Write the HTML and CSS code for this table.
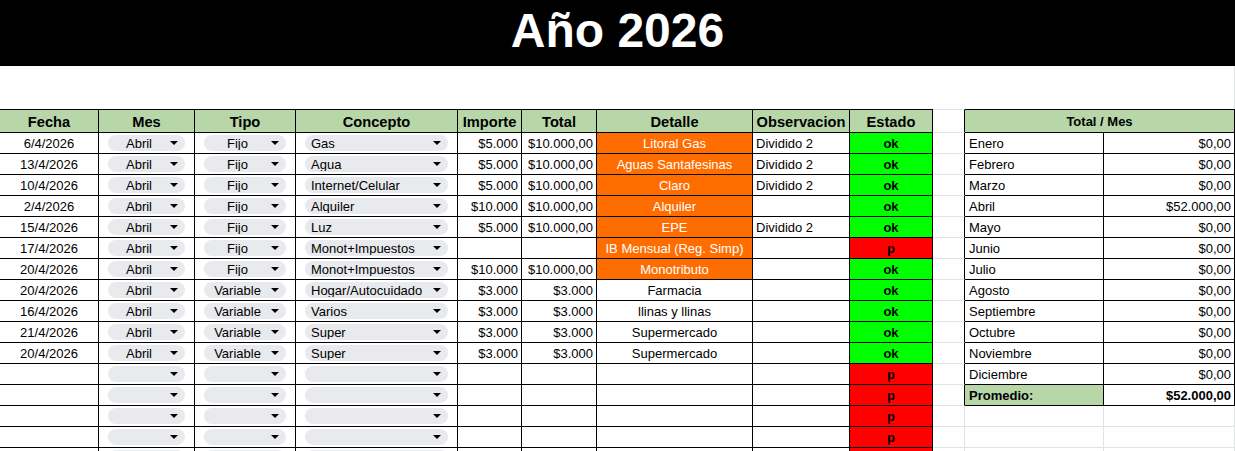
FILE: index.html
```html
<!DOCTYPE html>
<html lang="es">
<head>
<meta charset="utf-8">
<title>Año 2026</title>
<link rel="stylesheet" href="styles.css">
</head>
<body>
<div class="title">Año 2026</div>
<div class="spacer"></div>
<div class="sheet">
  <div class="main">
    <div class="cell hd">Fecha</div>
    <div class="cell hd">Mes</div>
    <div class="cell hd">Tipo</div>
    <div class="cell hd">Concepto</div>
    <div class="cell hd">Importe</div>
    <div class="cell hd">Total</div>
    <div class="cell hd">Detalle</div>
    <div class="cell hd">Observacion</div>
    <div class="cell hd">Estado</div>

    <div class="cell center">6/4/2026</div>
    <div class="cell sel"><div class="chip"><span class="chip-label">Abril</span><span class="caret"></span></div></div>
    <div class="cell sel"><div class="chip"><span class="chip-label">Fijo</span><span class="caret"></span></div></div>
    <div class="cell sel"><div class="chip chip-left"><span class="chip-label">Gas</span><span class="caret"></span></div></div>
    <div class="cell right">$5.000</div>
    <div class="cell right">$10.000,00</div>
    <div class="cell center orange">Litoral Gas</div>
    <div class="cell">Dividido 2</div>
    <div class="cell center st ok">ok</div>

    <div class="cell center">13/4/2026</div>
    <div class="cell sel"><div class="chip"><span class="chip-label">Abril</span><span class="caret"></span></div></div>
    <div class="cell sel"><div class="chip"><span class="chip-label">Fijo</span><span class="caret"></span></div></div>
    <div class="cell sel"><div class="chip chip-left"><span class="chip-label">Agua</span><span class="caret"></span></div></div>
    <div class="cell right">$5.000</div>
    <div class="cell right">$10.000,00</div>
    <div class="cell center orange">Aguas Santafesinas</div>
    <div class="cell">Dividido 2</div>
    <div class="cell center st ok">ok</div>

    <div class="cell center">10/4/2026</div>
    <div class="cell sel"><div class="chip"><span class="chip-label">Abril</span><span class="caret"></span></div></div>
    <div class="cell sel"><div class="chip"><span class="chip-label">Fijo</span><span class="caret"></span></div></div>
    <div class="cell sel"><div class="chip chip-left"><span class="chip-label">Internet/Celular</span><span class="caret"></span></div></div>
    <div class="cell right">$5.000</div>
    <div class="cell right">$10.000,00</div>
    <div class="cell center orange">Claro</div>
    <div class="cell">Dividido 2</div>
    <div class="cell center st ok">ok</div>

    <div class="cell center">2/4/2026</div>
    <div class="cell sel"><div class="chip"><span class="chip-label">Abril</span><span class="caret"></span></div></div>
    <div class="cell sel"><div class="chip"><span class="chip-label">Fijo</span><span class="caret"></span></div></div>
    <div class="cell sel"><div class="chip chip-left"><span class="chip-label">Alquiler</span><span class="caret"></span></div></div>
    <div class="cell right">$10.000</div>
    <div class="cell right">$10.000,00</div>
    <div class="cell center orange">Alquiler</div>
    <div class="cell"></div>
    <div class="cell center st ok">ok</div>

    <div class="cell center">15/4/2026</div>
    <div class="cell sel"><div class="chip"><span class="chip-label">Abril</span><span class="caret"></span></div></div>
    <div class="cell sel"><div class="chip"><span class="chip-label">Fijo</span><span class="caret"></span></div></div>
    <div class="cell sel"><div class="chip chip-left"><span class="chip-label">Luz</span><span class="caret"></span></div></div>
    <div class="cell right">$5.000</div>
    <div class="cell right">$10.000,00</div>
    <div class="cell center orange">EPE</div>
    <div class="cell">Dividido 2</div>
    <div class="cell center st ok">ok</div>

    <div class="cell center">17/4/2026</div>
    <div class="cell sel"><div class="chip"><span class="chip-label">Abril</span><span class="caret"></span></div></div>
    <div class="cell sel"><div class="chip"><span class="chip-label">Fijo</span><span class="caret"></span></div></div>
    <div class="cell sel"><div class="chip chip-left"><span class="chip-label">Monot+Impuestos</span><span class="caret"></span></div></div>
    <div class="cell right"></div>
    <div class="cell right"></div>
    <div class="cell center orange">IB Mensual (Reg. Simp)</div>
    <div class="cell"></div>
    <div class="cell center st pend">p</div>

    <div class="cell center">20/4/2026</div>
    <div class="cell sel"><div class="chip"><span class="chip-label">Abril</span><span class="caret"></span></div></div>
    <div class="cell sel"><div class="chip"><span class="chip-label">Fijo</span><span class="caret"></span></div></div>
    <div class="cell sel"><div class="chip chip-left"><span class="chip-label">Monot+Impuestos</span><span class="caret"></span></div></div>
    <div class="cell right">$10.000</div>
    <div class="cell right">$10.000,00</div>
    <div class="cell center orange">Monotributo</div>
    <div class="cell"></div>
    <div class="cell center st ok">ok</div>

    <div class="cell center">20/4/2026</div>
    <div class="cell sel"><div class="chip"><span class="chip-label">Abril</span><span class="caret"></span></div></div>
    <div class="cell sel"><div class="chip"><span class="chip-label">Variable</span><span class="caret"></span></div></div>
    <div class="cell sel"><div class="chip chip-left"><span class="chip-label">Hogar/Autocuidado</span><span class="caret"></span></div></div>
    <div class="cell right">$3.000</div>
    <div class="cell right">$3.000</div>
    <div class="cell center">Farmacia</div>
    <div class="cell"></div>
    <div class="cell center st ok">ok</div>

    <div class="cell center">16/4/2026</div>
    <div class="cell sel"><div class="chip"><span class="chip-label">Abril</span><span class="caret"></span></div></div>
    <div class="cell sel"><div class="chip"><span class="chip-label">Variable</span><span class="caret"></span></div></div>
    <div class="cell sel"><div class="chip chip-left"><span class="chip-label">Varios</span><span class="caret"></span></div></div>
    <div class="cell right">$3.000</div>
    <div class="cell right">$3.000</div>
    <div class="cell center">llinas y llinas</div>
    <div class="cell"></div>
    <div class="cell center st ok">ok</div>

    <div class="cell center">21/4/2026</div>
    <div class="cell sel"><div class="chip"><span class="chip-label">Abril</span><span class="caret"></span></div></div>
    <div class="cell sel"><div class="chip"><span class="chip-label">Variable</span><span class="caret"></span></div></div>
    <div class="cell sel"><div class="chip chip-left"><span class="chip-label">Super</span><span class="caret"></span></div></div>
    <div class="cell right">$3.000</div>
    <div class="cell right">$3.000</div>
    <div class="cell center">Supermercado</div>
    <div class="cell"></div>
    <div class="cell center st ok">ok</div>

    <div class="cell center">20/4/2026</div>
    <div class="cell sel"><div class="chip"><span class="chip-label">Abril</span><span class="caret"></span></div></div>
    <div class="cell sel"><div class="chip"><span class="chip-label">Variable</span><span class="caret"></span></div></div>
    <div class="cell sel"><div class="chip chip-left"><span class="chip-label">Super</span><span class="caret"></span></div></div>
    <div class="cell right">$3.000</div>
    <div class="cell right">$3.000</div>
    <div class="cell center">Supermercado</div>
    <div class="cell"></div>
    <div class="cell center st ok">ok</div>

    <div class="cell"></div>
    <div class="cell sel"><div class="chip"><span class="chip-label"></span><span class="caret"></span></div></div>
    <div class="cell sel"><div class="chip"><span class="chip-label"></span><span class="caret"></span></div></div>
    <div class="cell sel"><div class="chip chip-left"><span class="chip-label"></span><span class="caret"></span></div></div>
    <div class="cell"></div>
    <div class="cell"></div>
    <div class="cell"></div>
    <div class="cell"></div>
    <div class="cell center st pend">p</div>

    <div class="cell"></div>
    <div class="cell sel"><div class="chip"><span class="chip-label"></span><span class="caret"></span></div></div>
    <div class="cell sel"><div class="chip"><span class="chip-label"></span><span class="caret"></span></div></div>
    <div class="cell sel"><div class="chip chip-left"><span class="chip-label"></span><span class="caret"></span></div></div>
    <div class="cell"></div>
    <div class="cell"></div>
    <div class="cell"></div>
    <div class="cell"></div>
    <div class="cell center st pend">p</div>

    <div class="cell"></div>
    <div class="cell sel"><div class="chip"><span class="chip-label"></span><span class="caret"></span></div></div>
    <div class="cell sel"><div class="chip"><span class="chip-label"></span><span class="caret"></span></div></div>
    <div class="cell sel"><div class="chip chip-left"><span class="chip-label"></span><span class="caret"></span></div></div>
    <div class="cell"></div>
    <div class="cell"></div>
    <div class="cell"></div>
    <div class="cell"></div>
    <div class="cell center st pend">p</div>

    <div class="cell"></div>
    <div class="cell sel"><div class="chip"><span class="chip-label"></span><span class="caret"></span></div></div>
    <div class="cell sel"><div class="chip"><span class="chip-label"></span><span class="caret"></span></div></div>
    <div class="cell sel"><div class="chip chip-left"><span class="chip-label"></span><span class="caret"></span></div></div>
    <div class="cell"></div>
    <div class="cell"></div>
    <div class="cell"></div>
    <div class="cell"></div>
    <div class="cell center st pend">p</div>

    <div class="cell"></div>
    <div class="cell sel"><div class="chip"><span class="chip-label"></span><span class="caret"></span></div></div>
    <div class="cell sel"><div class="chip"><span class="chip-label"></span><span class="caret"></span></div></div>
    <div class="cell sel"><div class="chip chip-left"><span class="chip-label"></span><span class="caret"></span></div></div>
    <div class="cell"></div>
    <div class="cell"></div>
    <div class="cell"></div>
    <div class="cell"></div>
    <div class="cell pend"></div>
  </div>

  <div class="gap">
    <div class="gcell top edge"></div>
    <div class="gcell edge"></div>
    <div class="gcell edge"></div>
    <div class="gcell edge"></div>
    <div class="gcell edge"></div>
    <div class="gcell edge"></div>
    <div class="gcell edge"></div>
    <div class="gcell edge"></div>
    <div class="gcell edge"></div>
    <div class="gcell edge"></div>
    <div class="gcell edge"></div>
    <div class="gcell edge"></div>
    <div class="gcell edge"></div>
    <div class="gcell edge"></div>
    <div class="gcell"></div>
    <div class="gcell"></div>
    <div class="gcell"></div>
  </div>

  <div class="side">
    <div class="cell hd hd-small span2">Total / Mes</div>
    <div class="cell month">Enero</div><div class="cell right">$0,00</div>
    <div class="cell month">Febrero</div><div class="cell right">$0,00</div>
    <div class="cell month">Marzo</div><div class="cell right">$0,00</div>
    <div class="cell month">Abril</div><div class="cell right">$52.000,00</div>
    <div class="cell month">Mayo</div><div class="cell right">$0,00</div>
    <div class="cell month">Junio</div><div class="cell right">$0,00</div>
    <div class="cell month">Julio</div><div class="cell right">$0,00</div>
    <div class="cell month">Agosto</div><div class="cell right">$0,00</div>
    <div class="cell month">Septiembre</div><div class="cell right">$0,00</div>
    <div class="cell month">Octubre</div><div class="cell right">$0,00</div>
    <div class="cell month">Noviembre</div><div class="cell right">$0,00</div>
    <div class="cell month">Diciembre</div><div class="cell right">$0,00</div>
    <div class="cell month avg st">Promedio:</div><div class="cell right st">$52.000,00</div>
    <div class="cell blank"></div><div class="cell blank"></div>
    <div class="cell blank"></div><div class="cell blank"></div>
    <div class="cell blank"></div><div class="cell blank"></div>
  </div>
</div>
</body>
</html>
```

FILE: styles.css
```css
html, body {
  margin: 0;
  padding: 0;
  overflow: hidden;
  background: #fff;
}

body {
  font-family: "Liberation Sans", Arial, sans-serif;
  color: #000;
}

.title {
  height: 66px;
  background: #000;
  color: #fff;
  font-weight: bold;
  font-size: 48px;
  line-height: 61px;
  text-align: center;
}

.spacer {
  height: 43px;
  box-sizing: border-box;
  border-right: 1px solid #e2e3e3;
}

.sheet {
  display: flex;
  align-items: flex-start;
}

.main {
  display: grid;
  grid-template-columns: 99px 96px 101px 162px 64px 75px 156px 97px 83px;
  grid-template-rows: 24px;
  grid-auto-rows: 21px;
}

.gap {
  display: grid;
  grid-template-columns: 32px;
  grid-template-rows: 24px;
  grid-auto-rows: 21px;
}

.side {
  display: grid;
  grid-template-columns: 139px 131px;
  grid-template-rows: 24px;
  grid-auto-rows: 21px;
}

.cell {
  box-sizing: border-box;
  border-right: 1px solid #000;
  border-bottom: 1px solid #000;
  display: flex;
  align-items: center;
  padding: 1px 3px 0;
  font-size: 13px;
  white-space: nowrap;
  overflow: hidden;
  min-width: 0;
}

.center { justify-content: center; }
.right { justify-content: flex-end; }
.month { padding-left: 4px; }
.st { font-weight: bold; }

.hd {
  border-top: 1px solid #000;
  background: #b7d7a8;
  font-weight: bold;
  font-size: 14.67px;
  justify-content: center;
  padding-top: 1px;
}

.hd-small { font-size: 13px; }
.span2 { grid-column: span 2; }

.orange { background: #ff6d01; color: #fff; }
.ok { background: #00ff00; }
.pend { background: #ff0000; }
.avg { background: #b7d7a8; }

.blank { border-color: #e2e3e3; }

.sel { padding: 0 9px; }

.chip {
  flex: 1;
  min-width: 0;
  height: 16px;
  box-sizing: border-box;
  border-radius: 8px;
  background: #e8eaed;
  display: flex;
  align-items: center;
  gap: 6px;
  padding: 0 7px 0 6px;
}

.chip-label {
  flex: 1;
  min-width: 0;
  padding-top: 1px;
  line-height: 13px;
  text-align: center;
  overflow: hidden;
  white-space: nowrap;
}

.chip-left .chip-label { text-align: left; }

.caret {
  flex: none;
  width: 0;
  height: 0;
  border-left: 4px solid transparent;
  border-right: 4px solid transparent;
  border-top: 4px solid #000;
}

.gcell {
  box-sizing: border-box;
  border-right: 1px solid #e2e3e3;
  border-bottom: 1px solid #e2e3e3;
}

.gcell.top { border-top: 1px solid #e2e3e3; }
.gcell.edge { border-right-color: #000; }
```
